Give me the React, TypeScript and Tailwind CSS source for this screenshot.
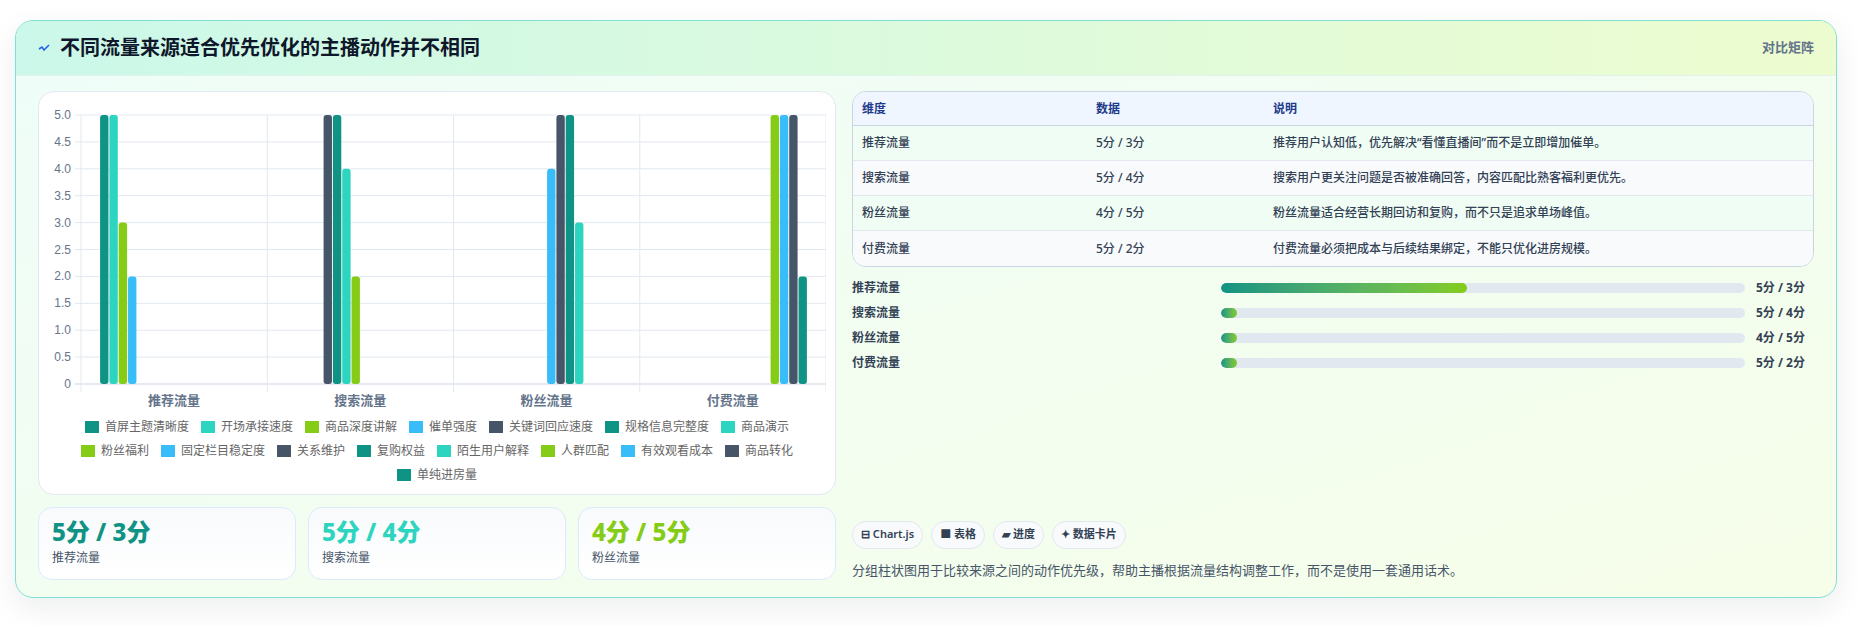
import React from "react";

const C = { teal: "#0f9384", turq: "#2dd4bf", lime: "#84cc16", sky: "#38bdf8", slate: "#475569" };

const series = [
  { name: "首屏主题清晰度", color: C.teal, cat: 0, v: 5 },
  { name: "开场承接速度", color: C.turq, cat: 0, v: 5 },
  { name: "商品深度讲解", color: C.lime, cat: 0, v: 3 },
  { name: "催单强度", color: C.sky, cat: 0, v: 2 },
  { name: "关键词回应速度", color: C.slate, cat: 1, v: 5 },
  { name: "规格信息完整度", color: C.teal, cat: 1, v: 5 },
  { name: "商品演示", color: C.turq, cat: 1, v: 4 },
  { name: "粉丝福利", color: C.lime, cat: 1, v: 2 },
  { name: "固定栏目稳定度", color: C.sky, cat: 2, v: 4 },
  { name: "关系维护", color: C.slate, cat: 2, v: 5 },
  { name: "复购权益", color: C.teal, cat: 2, v: 5 },
  { name: "陌生用户解释", color: C.turq, cat: 2, v: 3 },
  { name: "人群匹配", color: C.lime, cat: 3, v: 5 },
  { name: "有效观看成本", color: C.sky, cat: 3, v: 5 },
  { name: "商品转化", color: C.slate, cat: 3, v: 5 },
  { name: "单纯进房量", color: C.teal, cat: 3, v: 2 },
];

const cats = ["推荐流量", "搜索流量", "粉丝流量", "付费流量"];

const rows = [
  { dim: "推荐流量", data: "5分 / 3分", note: "推荐用户认知低，优先解决“看懂直播间”而不是立即增加催单。", pct: 47 },
  { dim: "搜索流量", data: "5分 / 4分", note: "搜索用户更关注问题是否被准确回答，内容匹配比熟客福利更优先。", pct: 3 },
  { dim: "粉丝流量", data: "4分 / 5分", note: "粉丝流量适合经营长期回访和复购，而不只是追求单场峰值。", pct: 3 },
  { dim: "付费流量", data: "5分 / 2分", note: "付费流量必须把成本与后续结果绑定，不能只优化进房规模。", pct: 3 },
];

const font = { fontFamily: '"Noto Sans", "Noto Sans CJK SC", sans-serif' };

function Chart() {
  const L = 30, R = 775, T = 11, B = 280;
  const cw = (R - L) / 4;
  const unit = (B - T) / 5;
  const slot = (cw * 0.8) / 16;
  return (
    <svg width="775" height="306" className="block">
      {[0, 1, 2, 3, 4, 5, 6, 7, 8, 9, 10].map((i) => {
        const y = B - i * unit * 0.5;
        return (
          <g key={i}>
            <line x1={L - 6} x2={R} y1={y} y2={y} stroke={i === 0 ? "#cbd5e1" : "#e2e8f0"} />
            <text x={L - 10} y={y + 4} textAnchor="end" fontSize="12" fill="#64748b" fontFamily="Liberation Sans, sans-serif">
              {i === 0 ? "0" : (i / 2).toFixed(1)}
            </text>
          </g>
        );
      })}
      {[0, 1, 2, 3, 4].map((i) => (
        <line key={i} x1={L + i * cw} x2={L + i * cw} y1={T} y2={B + 8} stroke="#e2e8f0" />
      ))}
      {series.map((s, idx) => {
        const x = L + s.cat * cw + cw * 0.1 + idx * slot + slot * 0.05;
        const h = s.v * unit;
        return <rect key={s.name} x={x} y={B - h} width={slot * 0.9} height={h} rx="3" fill={s.color} />;
      })}
      {cats.map((c, i) => (
        <text key={c} x={L + i * cw + cw / 2} y={301} textAnchor="middle" fontSize="13" fontWeight="600" fill="#64748b" style={font}>
          {c}
        </text>
      ))}
    </svg>
  );
}

function LegendItem({ name, color }: { name: string; color: string }) {
  return (
    <div className="flex items-center gap-[6px] text-[12px] text-[#666]">
      <span className="inline-block w-[14px] h-[12px]" style={{ background: color }} />
      {name}
    </div>
  );
}

export default function App() {
  const legendRows = [series.slice(0, 7), series.slice(7, 15), series.slice(15)];
  return (
    <div className="min-h-[626px] bg-white pl-[15px] pt-5" style={font}>
      <div className="w-[1822px] rounded-[18px] border border-[#7ee0d0] overflow-hidden shadow-[0_10px_30px_rgba(15,23,42,0.08)] bg-gradient-to-br from-[#effdf9] to-[#f6fee9]">
        <div className="h-[55px] flex items-center justify-between px-[22px] bg-gradient-to-r from-[#cbf8ea] to-[#edfccf] border-b border-[#e2f3ee]">
          <div className="flex items-center gap-[10px]">
            <svg width="12" height="10" viewBox="0 0 12 10">
              <path d="M1 6 L4 4 L6 7 L11 2" stroke="#2563eb" strokeWidth="1.6" fill="none" />
            </svg>
            <h2 className="text-[20px] font-bold text-[#0f172a]">不同流量来源适合优先优化的主播动作并不相同</h2>
          </div>
          <span className="text-[13px] font-semibold text-[#64748b]">对比矩阵</span>
        </div>
        <div className="flex gap-4 px-[22px] pt-[15px] pb-[17px]">
          <div className="w-[798px] flex flex-col gap-3">
            <div className="bg-white rounded-[16px] border border-[#e2e8f0] px-3 pt-3 pb-[10px]">
              <Chart />
              <div className="flex flex-col gap-[6px] mt-[8px]">
                {legendRows.map((r, i) => (
                  <div key={i} className="flex justify-center gap-[12px]">
                    {r.map((s) => (
                      <LegendItem key={s.name} name={s.name} color={s.color} />
                    ))}
                  </div>
                ))}
              </div>
            </div>
            <div className="grid grid-cols-3 gap-3">
              {[
                ["5分 / 3分", "推荐流量", "text-[#0f9384]"],
                ["5分 / 4分", "搜索流量", "text-[#2dd4bf]"],
                ["4分 / 5分", "粉丝流量", "text-[#84cc16]"],
              ].map(([v, l, c]) => (
                <div key={l} className="h-[73px] rounded-[14px] border border-[#dbeafe] bg-gradient-to-b from-[#f8fafc] to-white px-[13px] pt-[9px]">
                  <div className={`text-[24px] leading-[30px] font-extrabold ${c}`}>{v}</div>
                  <div className="text-[12px] text-[#475569] mt-[2px]">{l}</div>
                </div>
              ))}
            </div>
          </div>
          <div className="flex-1 flex flex-col">
            <div className="rounded-[14px] border border-[#cbd5e1] overflow-hidden text-[12px]">
              <div className="grid grid-cols-[234px_177px_1fr] h-[34px] items-center px-[9px] bg-[#eff6ff] text-[#1e3a8a] font-semibold border-b border-[#cbd5e1]">
                <span>维度</span>
                <span>数据</span>
                <span>说明</span>
              </div>
              {rows.map((r, i) => (
                <div
                  key={r.dim}
                  className={`grid grid-cols-[234px_177px_1fr] h-[35px] items-center px-[9px] text-[#334155] font-medium ${i % 2 === 0 ? "bg-[#f0fdf4]" : "bg-[#f8fafc]"} ${i < 3 ? "border-b border-[#e2e8f0]" : ""}`}
                >
                  <span>{r.dim}</span>
                  <span>{r.data}</span>
                  <span>{r.note}</span>
                </div>
              ))}
            </div>
            <div className="flex flex-col gap-[11px] mt-[12px]">
              {rows.map((r) => (
                <div key={r.dim} className="grid grid-cols-[369px_524px_1fr] items-center text-[12px] font-semibold text-[#334155] h-[14px]">
                  <span>{r.dim}</span>
                  <div className="h-[10px] rounded-full bg-[#e2e8f0] overflow-hidden">
                    <div className="h-full rounded-full bg-gradient-to-r from-[#0f9384] to-[#84cc16]" style={{ width: `${r.pct}%` }} />
                  </div>
                  <span className="pl-[11px] font-bold">{r.data}</span>
                </div>
              ))}
            </div>
            <div className="mt-auto flex gap-[8px]">
              {["⊟ Chart.js", "■ 表格", "▰ 进度", "✦ 数据卡片"].map((b) => (
                <span key={b} className="h-[28px] px-[8px] flex items-center rounded-full border border-[#e2e8f0] bg-[#f8fafc] text-[11px] font-semibold text-[#334155]">
                  {b}
                </span>
              ))}
            </div>
            <p className="mt-[12px] text-[13px] text-[#475569]">
              分组柱状图用于比较来源之间的动作优先级，帮助主播根据流量结构调整工作，而不是使用一套通用话术。
            </p>
          </div>
        </div>
      </div>
    </div>
  );
}
